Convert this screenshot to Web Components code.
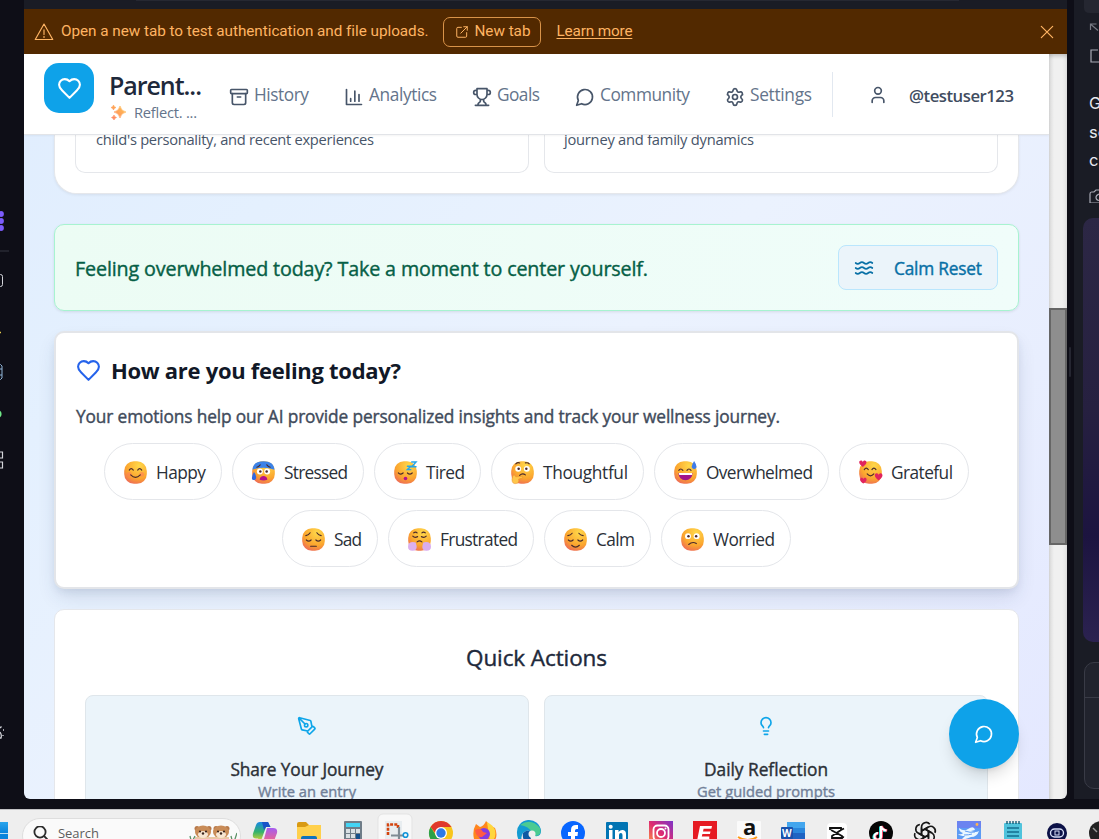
<!DOCTYPE html>
<html lang="en">
<head>
<meta charset="utf-8">
<title>Parent Journal</title>
<style>
html,body{margin:0;height:100%;overflow:hidden;background:#0e0e17}
body{font-family:"Open Sans","Noto Sans",sans-serif;color:#1e293b}
</style>
</head>
<body>
<desk-shell></desk-shell>
<script>
const define=(name,html,setup)=>customElements.define(name,class extends HTMLElement{
  connectedCallback(){
    if(this.shadowRoot)return;
    const r=this.attachShadow({mode:'open'});
    r.innerHTML=typeof html==='function'?html(this):html;
    if(setup)setup(this,r);
  }
});

/* One line of text; "w" spreads the letters to the given width, b="500" thickens the regular face. */
define('ui-text',el=>`<style>:host{display:block;flex:none;white-space:pre;line-height:1;height:1em;font-size:${el.getAttribute('s')||16}px;font-weight:${el.getAttribute('b')||400};${el.getAttribute('b')==='500'?'-webkit-text-stroke:.4px currentColor':''}}span{display:inline-block;text-decoration:inherit}</style><span><slot></slot></span>`,
(el,r)=>{
  const w=+el.getAttribute('w'),s=r.querySelector('span'),n=el.textContent.length;
  if(!w)return;
  const nat=s.getBoundingClientRect().width;
  s.style.letterSpacing=((w-nat)/(n-1))+'px';
  el.style.width=w+'px';
});

const ICONS={
heart:'<path d="M19 14c1.49-1.46 3-3.21 3-5.5A5.5 5.5 0 0 0 16.500 3c-1.760 0-3 .5-4.500 2-1.500-1.500-2.740-2-4.500-2A5.500 5.500 0 0 0 2 8.500c0 2.300 1.500 4.050 3 5.500l7 7Z"/>',
archive:'<rect x="2" y="3" width="20" height="5" rx="1"/><path d="M4 8v11a2 2 0 0 0 2 2h12a2 2 0 0 0 2-2V8M10 12h4"/>',
chart:'<path d="M3 3v18h18M18 17V9M13 17V5M8 17v-3"/>',
trophy:'<path d="M6 9H4.500a2.500 2.500 0 0 1 0-5H6M18 9h1.500a2.500 2.500 0 0 0 0-5H18M4 22h16M10 14.660V17c0 .55-.47.98-.97 1.210C7.850 18.750 7 20.240 7 22M14 14.660V17c0 .55.47.98.97 1.210C16.150 18.750 17 20.240 17 22M18 2H6v7a6 6 0 0 0 12 0V2Z"/>',
chat:'<path d="M7.900 20A9 9 0 1 0 4 16.100L2 22Z"/>',
gear:'<path d="M9.671 4.136a2.340 2.340 0 0 1 4.659 0 2.340 2.340 0 0 0 3.319 1.915 2.340 2.340 0 0 1 2.330 4.033 2.340 2.340 0 0 0 0 3.831 2.340 2.340 0 0 1-2.330 4.033 2.340 2.340 0 0 0-3.319 1.915 2.340 2.340 0 0 1-4.659 0 2.340 2.340 0 0 0-3.320-1.915 2.340 2.340 0 0 1-2.330-4.033 2.340 2.340 0 0 0 0-3.831A2.340 2.340 0 0 1 6.350 6.051a2.340 2.340 0 0 0 3.319-1.915"/><circle cx="12" cy="12" r="3"/>',
user:'<path d="M19 21v-2a4 4 0 0 0-4-4H9a4 4 0 0 0-4 4v2"/><circle cx="12" cy="7" r="4"/>',
waves:'<path d="M2 6c.6.5 1.200 1 2.500 1C7 7 7 5 9.500 5c2.600 0 2.400 2 5 2 2.500 0 2.500-2 5-2 1.300 0 1.900.5 2.500 1M2 12c.6.5 1.200 1 2.500 1 2.500 0 2.500-2 5-2 2.600 0 2.400 2 5 2 2.500 0 2.500-2 5-2 1.300 0 1.900.5 2.500 1M2 18c.6.5 1.200 1 2.500 1 2.500 0 2.500-2 5-2 2.600 0 2.400 2 5 2 2.500 0 2.500-2 5-2 1.300 0 1.900.5 2.500 1"/>',
pen:'<path d="M15.707 21.293a1 1 0 0 1-1.414 0l-1.586-1.586a1 1 0 0 1 0-1.414l5.586-5.586a1 1 0 0 1 1.414 0l1.586 1.586a1 1 0 0 1 0 1.414zM18 13l-1.375-6.874a1 1 0 0 0-.746-.776L3.235 2.028a1 1 0 0 0-1.207 1.207L5.350 15.879a1 1 0 0 0 .776.746L13 18M2.300 2.300l7.286 7.286"/><circle cx="11" cy="11" r="2"/>',
bulb:'<path d="M15 14c.2-1 .7-1.700 1.500-2.500 1-.9 1.500-2.200 1.500-3.500A6 6 0 0 0 6 8c0 1 .2 2.200 1.500 3.500.7.7 1.300 1.500 1.500 2.500M9 18h6M10 22h4"/>',
warn:'<path d="M12 2.500 22.500 21h-21ZM12 9.500v5.500M12 17.200v1.300"/>',
external:'<path d="M11 4H5a2 2 0 0 0-2 2v13a2 2 0 0 0 2 2h13a2 2 0 0 0 2-2v-6M15 3h6v6M21 3 10 14"/>',
close:'<path d="M3.500 3.500 20.500 20.500M20.500 3.500 3.500 20.500"/>'
};
define('ui-icon',el=>{const s=el.getAttribute('size')||20;return `<style>:host{display:block;flex:none;width:${s}px;height:${s}px}svg{display:block}</style><svg width="${s}" height="${s}" viewBox="0 0 24 24" fill="none" stroke="currentColor" stroke-width="${el.getAttribute('sw')||2}" stroke-linecap="round" stroke-linejoin="round">${ICONS[el.getAttribute('name')]}</svg>`});

/* Emoji faces */
const B='#4a2a2b',st=(d,w=1.2,c=B)=>`<path d="${d}" fill="none" stroke="${c}" stroke-width="${w}" stroke-linecap="round"/>`;
const eyes=(y,l=8.2,r=15.8)=>`<circle cx="${l}" cy="${y}" r="3.100" fill="#fff"/><circle cx="${r}" cy="${y}" r="3.100" fill="#fff"/><circle cx="${l+.5}" cy="${y}" r="1.300" fill="${B}"/><circle cx="${r-.5}" cy="${y}" r="1.300" fill="${B}"/>`;
const heart=(x,y,k)=>`<path transform="translate(${x} ${y}) scale(${k})" d="M0 1.500C-1-1-4-.5-4 2c0 2 2 3.500 4 5 2-1.500 4-3 4-5 0-2.500-3-3-4-.5Z" fill="#e0245e"/>`;
const FACES={
happy:'<circle cx="5.500" cy="14" r="2.500" fill="#ff7a5c" opacity=".55"/><circle cx="18.500" cy="14" r="2.500" fill="#ff7a5c" opacity=".55"/>'+st('M5.500 9.500q2-3 4.200 0M14.300 9.500q2-3 4.200 0M7 14.500q5 5 10 0'),
stressed:'<path d="M.5 9C1 3 5 .2 12 .2S23 3 23.500 9Q12 5 .5 9Z" fill="#3b82e8"/>'+eyes(11)+st('M5 6.500q2-.5 3.500-2.500M19 6.500q-2-.5-3.500-2.500')+'<path d="M8 19.500c0-5 8-5 8 0q-4 1.500-8 0Z" fill="#b5128a"/><path d="M2 11.500q3.500 4 1.800 7.500-2 1.800-3.700 0-.8-3 1.900-7.500" fill="#3169e0"/>',
tired:st('M4.500 12.500q2 2.500 5 0M14 12.500q2.500 2.500 5 0')+'<circle cx="12" cy="18.300" r="1.900" fill="#b5128a"/>'+st('M18.500 1H23l-4.500 5H23M14 5.500h3.500L14 9h3.500',1.5,'#25a5e8'),
thoughtful:eyes(8.2,7.5,16.5)+st('M5 3q2-2 4-1M15 2q3-.5 4 1M9 15q3-3 6-.5')+'<path d="M2 15q2-1.500 3 1.500l7-.5q1 1.500-1 2l-3 .8q1 4.500-3 4.800-4 .5-4-4.500Z" fill="#ffc64b" stroke="#e58b29" stroke-width=".5"/>',
overwhelmed:st('M5 9.800q2-3 4.300 0M13.500 9.800q2-3 4.300 0')+'<path d="M4.500 12.500h15q-.8 7.500-7.500 7.500t-7.500-7.500Z" fill="#a1158a"/><path d="M5 12.500h14v2.200H5.500Z" fill="#fff"/><path d="M21 0q5 7.500 0 8.500-5-1 0-8.500" fill="#3f7bea"/>',
grateful:st('M5.500 9q2-3 4.200 0M13.500 9q2-3 4.200 0M8.500 13.500q3.500 4 7 0')+heart(4,-.5,.95)+heart(20.5,13,1)+heart(4.5,17.5,.85),
sad:st('M4 8q3-.5 4.500-3M20 8q-3-.5-4.500-3M4.500 12.500q2.500 2.500 5 0M14.500 12.500q2.500 2.500 5 0M9 19h6'),
frustrated:st('M6 5q2-1.500 3.500 0M18 5q-2-1.500-3.500 0M5 8.500q2 2.200 5 .5M14 9q3 1.700 5-.5M9.500 14.500q2.500-2 5 0')+'<path d="M8 15q-8-1.500-8 4.500 0 4.500 5 4.300 4.500-.3 4-5Z" fill="#dcb0ee"/><path d="M16 15q8-1.500 8 4.500 0 4.500-5 4.300-4.500-.3-4-5Z" fill="#d9adee"/>',
calm:st('M4 8q3-.5 4.500-2.500M20 8q-3-.5-4.500-2.500M4.500 12.500q2.500 2.500 5 0M14.500 12.500q2.500 2.500 5 0M8 18q4 4 8 0'),
worried:eyes(8.5,7.3,16.3)+st('M8 17.200q4-3.500 8-1')
};
define('mood-face',el=>`<style>:host{display:block;flex:none;width:23px;height:23px}svg{display:block;overflow:visible}</style><svg width="23" height="23" viewBox="0 0 24 24"><defs><radialGradient id="g" cx=".65" cy=".2" r=".95"><stop offset="0" stop-color="#ffd84a"/><stop offset=".6" stop-color="#fba52e"/><stop offset="1" stop-color="#ea5a62"/></radialGradient></defs><rect x=".2" y=".2" width="23.600" height="23.600" rx="10.200" fill="url(#g)"/>${FACES[el.getAttribute('kind')]}</svg>`);

define('preview-banner',`<style>
:host{display:flex;align-items:center;height:45px;box-sizing:border-box;background:#522900;color:#ffb463;padding:0 12px 0 10px;font-family:Roboto,sans-serif}
.btn{display:flex;align-items:center;box-sizing:border-box;width:98px;height:30px;border:1px solid #d99349;border-radius:7px;margin:1px 15px 0 15px;padding:0 0 0 11px;gap:6px}
.btn ui-icon{margin-top:-1px}.btn ui-text{margin:0 0 0 -.5px}
.link{text-decoration:underline;text-underline-offset:2px;margin:1px 0 0 .5px}.t{margin:1px 0 0 7px}.x{margin-left:auto}
</style><ui-icon name="warn" size="20" sw="1.400"></ui-icon><ui-text class="t" s="15.300" w="367">Open a new tab to test authentication and file uploads.</ui-text><div class="btn"><ui-icon name="external" size="14" sw="1.700"></ui-icon><ui-text s="15.300" w="56">New tab</ui-text></div><ui-text class="link" s="15.300" w="76">Learn more</ui-text><ui-icon class="x" name="close" size="16" sw="1.800"></ui-icon>`);

define('nav-item',el=>`<style>:host{display:flex;align-items:center;gap:5px;color:#475569}ui-text{color:#64748b;margin-top:-4px}</style><ui-icon name="${el.getAttribute('icon')}"></ui-icon><ui-text s="17.300" w="${el.getAttribute('w')}">${el.textContent}</ui-text>`);

define('app-header',`<style>
:host{display:flex;height:80px;box-sizing:content-box;background:#fff;border-bottom:1px solid #e2e4e8;box-shadow:0 1px 2px #0000000c;position:relative;z-index:2;padding-left:20px}
.logo{width:50px;height:50px;margin-top:9px;border-radius:15px;background:#0ea2e9;color:#fff;display:grid;place-items:center}
.name{margin:19px 27px 0 15px;width:93px}.sub{display:flex;gap:8px;margin:7px 0 0 2px;color:#64748b}
nav{display:flex;gap:35px;height:86px;align-items:center}
.sep{width:1px;height:45px;background:#e2e8f0;margin:18px 35px 0 20px}
.user{display:flex;height:82px;align-items:center;gap:21px;color:#475569}.user ui-text{color:#3f4c60;margin-top:3px}
</style><div class="logo"><ui-icon name="heart" size="25"></ui-icon></div>
<div class="name"><ui-text s="25" b="600" w="93">Parent...</ui-text><div class="sub"><svg width="15" height="15" viewBox="0 0 15 15"><defs><linearGradient id="s" x1="1" y1="0" x2="0" y2="1"><stop stop-color="#ffc94f"/><stop offset="1" stop-color="#ff7e63"/></linearGradient></defs><path fill="url(#s)" d="M9 1q1 5 6 6-5 1-6 6-1-5-6-6 5-1 6-6ZM2.500 0q.4 2 2.500 2.500Q2.900 3 2.500 5 2 3 0 2.500 2 2 2.500 0ZM3 10q.4 2 2.500 2.500Q3.400 13 3 15 2.500 13 .5 12.500 2.500 12 3 10Z" stroke="url(#s)" stroke-width=".6"/></svg><ui-text s="14.700" w="63">Reflect. ...</ui-text></div></div>
<nav><nav-item icon="archive" w="55">History</nav-item><nav-item icon="chart" w="68">Analytics</nav-item><nav-item icon="trophy" w="43">Goals</nav-item><nav-item icon="chat" w="90">Community</nav-item><nav-item icon="gear" w="62">Settings</nav-item></nav><div class="sep"></div><div class="user"><ui-icon name="user"></ui-icon><ui-text s="16.700" b="600" w="105">@testuser123</ui-text></div>`);

define('insight-card',`<style>
:host{display:flex;gap:15px;height:59px;box-sizing:border-box;margin:0 30px 0 30px;background:#fff;border:1px solid #e5e7eb;border-top:0;border-radius:0 0 22px 22px;padding:0 20px;box-shadow:0 1px 3px #0001;color:#475569}
div{flex:1 1 0;min-width:0;box-sizing:border-box;height:38px;border:1px solid #e5e7eb;border-top:0;border-radius:0 0 10px 10px;padding-left:20px}ui-text{margin-top:-3px}.b ui-text{margin-left:-1px}
</style><div><ui-text s="14.700" w="278">child's personality, and recent experiences</ui-text></div><div class="b"><ui-text s="14.700" w="190">journey and family dynamics</ui-text></div>`);

define('calm-banner',`<style>
:host{display:flex;align-items:center;justify-content:space-between;box-sizing:border-box;height:87px;margin:30px 30px 0 30px;padding:0 20px;border:1px solid #a7f3d0;border-radius:10px;background:linear-gradient(90deg,#ecfcf4,#f0fdfa);box-shadow:0 1px 3px #00000018;color:#065f46}
.btn{display:flex;align-items:center;gap:20px;box-sizing:border-box;width:160px;height:45px;padding-left:15px;border:1px solid #bae6fd;border-radius:8px;background:#ebf4fa;color:#0870a6}ui-text{margin-top:2px}.btn ui-text{margin-top:3px}
</style><ui-text s="19.700" b="500" w="573">Feeling overwhelmed today? Take a moment to center yourself.</ui-text><div class="btn"><ui-icon name="waves"></ui-icon><ui-text s="17.300" b="500" w="88">Calm Reset</ui-text></div>`);

define('mood-chip',el=>`<style>:host{display:flex;align-items:center;box-sizing:border-box;height:57px;border:1px solid #e4e6ea;border-radius:29px;background:#fff;padding:0 15px 0 19px;gap:9px;color:#2a3038}ui-text{margin-top:2px}mood-face{margin-top:1px}</style><mood-face kind="${el.getAttribute('kind')}"></mood-face><ui-text s="17.300" w="${el.getAttribute('w')}">${el.textContent}</ui-text>`);

define('mood-card',`<style>
:host{display:block;box-sizing:border-box;height:258px;margin:20px 30px 0 30px;padding:24px 20px 0 20px;border:2px solid #e3e5e9;border-radius:10px;background:#fff;box-shadow:0 10px 20px -3px #20386024,0 4px 8px -2px #20386018}
.h{display:flex;align-items:center;gap:10px;color:#2563eb;height:28px}.h ui-icon{margin-top:-2px}.h ui-text{color:#111827;margin-top:-3px}
.p{color:#414b5b;height:17px;margin-top:23px}
.row{display:flex;justify-content:center;gap:10px;margin-top:10px}.first{margin-top:18px}
</style><div class="h"><ui-icon name="heart" size="25"></ui-icon><ui-text s="22" b="700" w="290">How are you feeling today?</ui-text></div>
<ui-text class="p" s="17.300" b="500" w="704">Your emotions help our AI provide personalized insights and track your wellness journey.</ui-text>
<div class="row first"><mood-chip kind="happy" w="50">Happy</mood-chip><mood-chip kind="stressed" w="64">Stressed</mood-chip><mood-chip kind="tired" w="39">Tired</mood-chip><mood-chip kind="thoughtful" w="85">Thoughtful</mood-chip><mood-chip kind="overwhelmed" w="107">Overwhelmed</mood-chip><mood-chip kind="grateful" w="62">Grateful</mood-chip></div>
<div class="row"><mood-chip kind="sad" w="28">Sad</mood-chip><mood-chip kind="frustrated" w="78">Frustrated</mood-chip><mood-chip kind="calm" w="39">Calm</mood-chip><mood-chip kind="worried" w="62">Worried</mood-chip></div>`);

define('action-card',el=>`<style>:host{display:flex;flex-direction:column;align-items:center;flex:1;box-sizing:border-box;height:140px;border:1px solid #dfe6eb;border-radius:8px;background:#ebf4fa;padding-top:20px;color:#0ea5e9}.a{color:#2b3037;margin-top:25px}.b{color:#718098;margin-top:6px}</style><ui-icon name="${el.getAttribute('icon')}"></ui-icon><ui-text class="a" s="17.300" b="500" w="${el.getAttribute('w1')}">${el.getAttribute('label')}</ui-text><ui-text class="b" s="14.700" b="500" w="${el.getAttribute('w2')}">${el.getAttribute('hint')}</ui-text>`);

define('quick-actions',`<style>
:host{display:block;box-sizing:border-box;height:240px;margin:20px 30px 0 30px;padding:37px 30px 0;border:1px solid #e5e7eb;border-radius:10px;background:#fff}
.t{display:flex;justify-content:center;height:22.500px}.c{display:flex;gap:15px;margin-top:25px}
</style><div class="t"><ui-text s="22.500" b="500" w="141">Quick Actions</ui-text></div><div class="c"><action-card icon="pen" label="Share Your Journey" w1="153" hint="Write an entry" w2="98"></action-card><action-card icon="bulb" label="Daily Reflection" w1="124" hint="Get guided prompts" w2="138"></action-card></div>`);

define('chat-fab',`<style>:host{position:absolute;right:30px;bottom:30px;width:70px;height:70px;border-radius:50%;display:grid;place-items:center;background:#0ea2e9;color:#fff;box-shadow:0 10px 15px -3px #0002,0 4px 6px -4px #0002}</style><ui-icon name="chat" size="20"></ui-icon>`);

define('left-rail',`<style>:host{display:block;width:24px;background:#0e0e17}svg{display:block}</style>
<svg width="24" height="809" fill="none"><g fill="#7c5cfc"><circle cx="1" cy="214" r="2.900"/><circle cx="1" cy="221" r="2.900"/><circle cx="1" cy="228" r="2.900"/></g><path d="M0 251h9" stroke="#292a35" stroke-width="1.500"/><rect x="-8" y="274.500" width="10.500" height="12" rx="2" stroke="#d3d4da"/><path d="M0 332.500h1" stroke="#e3c94b" stroke-width="1.500"/><path d="M-6 364.500H.5l1.500 1.500v12l-1.500 1.500H-6M-6 369H2M-6 375H2" stroke="#8fb4d8"/><circle cx="-2" cy="414" r="3.600" fill="#6ee787"/><path d="M-3 452h5.500v6H-3M-3 462h5.500v6H-3" stroke="#d3d4da" stroke-width="1.200"/><path d="M0 728l1.500-1.500M3 730h1M0 732q2 3 1 6H-1M3 735v1" stroke="#d3d4da" stroke-width="1.300"/></svg>`);

define('right-rail',`<style>
:host{display:flex;flex-direction:column;width:25px;height:799px;background:#1a1c25;box-sizing:border-box;padding-left:9px;color:#e6e7ee;overflow:hidden;font-family:Inter,sans-serif}
svg{display:block;flex:none}ui-text{margin-left:6px;margin-bottom:12px}
.img{margin-top:15px;width:40px;height:424px;flex:none;border-radius:10px;background:linear-gradient(#2c2745,#262040 45%,#1c1440 75%,#2b2250)}
.box{margin:20px 0 0 1px;width:40px;height:127px;flex:none;border:1px solid #393b46;border-radius:10px;background:#21232d;box-sizing:border-box}.box i{display:block;border-top:1px solid #393b46;margin-top:34px}
</style><svg width="16" height="95" fill="none" stroke="#a8aab5" stroke-width="1.200"><path d="M1 0v8q0 5 6 5h9V0" fill="#252731" stroke="none"/><path d="M7.500 30v-6h6M8 24.500l7 6" stroke="#777a84"/><path d="M15 50H8v12h8"/></svg>
<ui-text s="16.500">G</ui-text><ui-text s="16.500">se</ui-text><ui-text s="16.500">c</ui-text>
<svg width="16" height="22" fill="none" stroke="#a8aab5" stroke-width="1.200"><path d="M16 11h-3l-2 2H8.500q-1.500 0-1.500 2v9h9M16 15q-3 1-3 3.500t3 3" transform="translate(0 -2)"/></svg>
<div class="img"></div><div class="box"><i></i></div>`);

/* Taskbar pictograms, each on a 24-unit square */
const APPS=[
'<defs><linearGradient id="a1" x1="0" y1="0" x2="0" y2="1"><stop stop-color="#1687e8"/><stop offset=".5" stop-color="#35b36b"/><stop offset="1" stop-color="#f2d82d"/></linearGradient><linearGradient id="a2" x1="0" y1="0" x2="0" y2="1"><stop stop-color="#a45cf0"/><stop offset="1" stop-color="#ff6778"/></linearGradient></defs><path d="M7 1h8l2.500 5H13l-4 11-1.500 4L5 17.500H3q-4 0-3-5L3 4q1-3 4-3Z" fill="url(#a1)"/><path d="M9 1h6l2.500 5H13l-2 3Z" fill="#1753c7"/><path d="M14 7h6q5 0 4 5l-3 8q-1 3-5 3H9l-1-1 3-4Z" fill="url(#a2)"/>',
'<path d="M0 3q0-2 2-2h7l3 3h12v20H0Z" fill="#d99a13"/><path d="M0 6h8l4-2h12v20H0Z" fill="#ffd04c"/><rect x="4" y="15" width="16" height="9" rx="2" fill="#1072bd"/>',
'<rect x="3" width="18" height="26" rx="1" fill="#6f7d88"/><rect x="5" y="2" width="14" height="4" fill="#43d4f4"/><path d="M5 8h4v4H5ZM10 8h4v4h-4ZM15 8h4v4h-4ZM5 13h4v4H5ZM10 13h4v4h-4ZM5 18h4v4H5ZM10 18h4v4h-4Z" fill="#dae0e4"/><path d="M15 13h4v9h-4Z" fill="#16508b"/>',
'<rect x="-7" y="-7" width="34" height="42" rx="5" fill="#f8f8f8" stroke="#e3e3e3"/><rect x="0" y="0" width="17" height="18" fill="#e8edf0"/><path d="M3 14V3.500h10V7" fill="none" stroke="#d4430d" stroke-width="2.600" stroke-dasharray="3 1.200"/><path d="M6 14.500h13M14 6v14" stroke="#7e8b94" stroke-width="2.200"/><circle cx="20.500" cy="14" r="2.300" fill="none" stroke="#1293d8" stroke-width="1.600"/>',
'<circle cx="12" cy="12" r="12" fill="#f8c51c"/><path d="M1.600 6A12 12 0 0 1 22.400 6H12l-4 8Z" fill="#e0382c"/><path d="M1.600 6 8 16l5 1-3 7A12 12 0 0 1 1.600 6Z" fill="#2ca04a"/><circle cx="12" cy="12" r="6" fill="#fff"/><circle cx="12" cy="12" r="4.700" fill="#2d79e8"/>',
'<path d="M3 3l4 3q4-1 6-6l5 5 4 2q3 7 0 12-4 5-10 5T1 18Q-1 10 3 3" fill="#ff861d"/><path d="M14 1q6 3 8 8 2 9-5 12Z" fill="#ffd63d"/><circle cx="11" cy="13" r="6" fill="#833be0"/><path d="M2 9q6-3 8 2l4 1-5 4Q3 17 2 9" fill="#ff5a43"/>',
'<path d="M0 12A12 12 0 0 1 24 10q0 6-6 5-4 0-3-3-4-5-9 0-4 6 2 12-8-3-8-12" fill="#139bd2"/><path d="M3 4Q14-4 23 7q2 8-5 8-4 0-3-3-3-7-12-8" fill="#4bcb92"/><path d="M6 12q5-5 9 0-3 1-1 6l8 2q-7 7-13 2Q5 18 6 12" fill="#0c59a4"/><circle cx="15" cy="13" r="3.500" fill="#eee"/>',
'<circle cx="12" cy="12" r="12" fill="#0866ff"/><path d="M10 24v-9H7v-4h3V9q0-5 5-5h2v4h-1.500Q14 8 14 9.500V11h3l-.5 4H14v9" fill="#fff"/>',
'<rect x="1" y="1" width="22" height="23" rx="1" fill="#0274b3"/><path d="M4 9h3.500v12H4ZM10 9h3.500v2q2-2.500 4.500-2 3 .5 3 4v8h-3.500v-7q0-2-1.700-2T14 14v7h-4Z" fill="#fff"/><circle cx="5.700" cy="5.700" r="2" fill="#fff"/>',
'<defs><linearGradient id="i" x1="1" y1="0" x2="0" y2="1"><stop stop-color="#7c35c9"/><stop offset=".5" stop-color="#dd2a72"/><stop offset="1" stop-color="#ff9c3c"/></linearGradient></defs><rect width="24" height="24" fill="url(#i)"/><rect x="4.500" y="4.500" width="15" height="15" rx="4" fill="none" stroke="#fff" stroke-width="1.800"/><circle cx="12" cy="12" r="4" fill="none" stroke="#fff" stroke-width="1.800"/><circle cx="16.500" cy="7.500" r="1" fill="#fff"/>',
'<rect width="24" height="24" fill="#e61b23"/><path d="M7 5h12l-.6 2.800h-7.800l-.6 2.700h7.500l-.6 2.500h-7.500l-.6 2.500h7.500V20H4Z" fill="#fff"/>',
'<rect width="24" height="24" rx="1" fill="#fafafa"/><path d="M1 16q10 6 19 0" fill="none" stroke="#ff9b17" stroke-width="2"/>',
'<path d="M6 1h18v23H6Z" fill="#1f63c2"/><path d="M6 1h18v6H6Z" fill="#43a6ee"/><path d="M6 7h18v5H6Z" fill="#2a86dc"/><rect y="6" width="12" height="12" rx="1" fill="#1a52ad"/>',
'<rect x="2" y="2" width="20" height="24" rx="4" fill="#fff"/><path d="M5 9V7h11v2l-9 6v2h10v-2L6 9M16 9l3-1.500M16 15l3 1.500" fill="none" stroke="#111" stroke-width="1.800"/>',
'<circle cx="12" cy="12" r="12" fill="#050505"/><path d="M12 5v10.500a3.300 3.300 0 1 1-3-3.300M12 5q1 4 5.500 4.500" transform="translate(-.7 .5)" fill="none" stroke="#20e3e0" stroke-width="2.600"/><path d="M12 5v10.500a3.300 3.300 0 1 1-3-3.300M12 5q1 4 5.500 4.500" transform="translate(.7 0)" fill="none" stroke="#ff3b5f" stroke-width="2.600"/><path d="M12 5v10.500a3.300 3.300 0 1 1-3-3.300M12 5q1 4 5.500 4.500" fill="none" stroke="#fff" stroke-width="2.200"/>',
'<g fill="none" stroke="#161616" stroke-width="1.600">'+[0,60,120,180,240,300].map(a=>`<path d="M8.500 14V6a4.600 4.600 0 0 1 8.300-2.700M8.500 10l6.500-3.700" transform="rotate(${a} 12 12)"/>`).join('')+'</g>',
'<rect width="24" height="24" fill="#5d9bf4"/><rect width="24" height="7" fill="#6b83f0"/><path d="M2 7q5 4 9 1 6-4 7 1l-4 1q5 2 8 0-2 6-8 6-7 3-9 2l3-3q-5 0-7-2 4 1 5-1-4-1-4-5" fill="#eaf7ff"/><path d="M8 10q5 2 10 1M7 14q5 0 8-1" stroke="#5d9bf4" fill="none"/><circle cx="20" cy="3.500" r="1.400" fill="#ffb54c"/>',
'<rect x="3" y="2" width="18" height="24" rx="1" fill="#50c3dc"/><path d="M6 0v3M9 0v3M12 0v3M15 0v3M18 0v3" stroke="#145c77" stroke-width="1.400"/><path d="M6 7h12M6 11h12M6 15h12" stroke="#136f8e" stroke-width="1.500"/>',
'<circle cx="12" cy="12" r="10" fill="#0c1147"/><rect x="5.500" y="8" width="13" height="8" rx="4" fill="none" stroke="#d5dcf5" stroke-width="1.400"/><rect x="10" y="10" width="4" height="4" fill="none" stroke="#d5dcf5"/>',
'<circle cx="12" cy="12" r="12" fill="#222"/><path d="M4 7l4 4" stroke="#999" stroke-width="1.500"/>'
];
define('task-bar',`<style>
:host{display:flex;height:30px;background:#eee;border-top:1px solid #c2c2c5;box-sizing:border-box;overflow:hidden;align-items:flex-start}
.win{width:8px;height:11px;margin:12px 14px 0 0;background:linear-gradient(#2aa5ec,#0a83dc);border-bottom:1px solid #b9dcf2;box-shadow:0 8px 0 #0a83dc;flex:none;box-sizing:content-box}
.s{display:flex;box-sizing:border-box;width:219px;height:36px;margin:8px 2px 0 0;border:1px solid #dedede;border-radius:18px;background:#fafafa;color:#5d5d5d;padding:7px 3px 0 9px;flex:none}.s ui-text{margin:1px 0 0 10px}.bear{margin-left:auto;margin-top:-2px}
.apps{display:flex}.app{position:relative;width:44px;flex:none;display:flex;justify-content:center;padding-top:11px}.app svg{overflow:visible;display:block}
.g{position:absolute;line-height:1;font-weight:700}
</style><div class="win"></div><div class="s"><svg width="16" height="18" fill="none" stroke="#2b2b2b" stroke-width="1.800"><circle cx="8" cy="6" r="5.600"/><path d="m12 10 4 4"/></svg><ui-text s="13" w="41">Search</ui-text>
<svg class="bear" width="48" height="26" viewBox="0 0 48 26"><g fill="#b7794a"><circle cx="8" cy="4.500" r="2.500"/><circle cx="20" cy="4.500" r="2.500"/><circle cx="27" cy="4.500" r="2.500"/><circle cx="38" cy="4.500" r="2.500"/></g><g fill="#c98c58"><ellipse cx="14" cy="8" rx="8" ry="6.500"/><ellipse cx="32" cy="8" rx="8" ry="6.500"/></g><path d="M6 13h34v13H6Z" fill="#e9c8a5"/><g fill="#f7e6d2"><ellipse cx="14" cy="10.500" rx="5" ry="3.500"/><ellipse cx="32" cy="10.500" rx="5" ry="3.500"/></g><g fill="#3b251d"><circle cx="11" cy="7.500" r="1.100"/><circle cx="17" cy="7.500" r="1.100"/><circle cx="14" cy="9.500" r="1.200"/><circle cx="29" cy="7.500" r="1.100"/><circle cx="35" cy="7.500" r="1.100"/><circle cx="32" cy="9.500" r="1.200"/></g><path d="M3 20 1 12M3 18l3-6M44 20l-2-8M45 18l3-9" stroke="#5c9267" stroke-width="1.300"/></svg></div>
<div class="apps">${APPS.map((a,i)=>`<div class="app"><svg width="24" height="24" viewBox="0 0 24 24">${a}</svg>${i===11?'<span class="g" style="font-size:22px;top:5px;left:16px;color:#111">a</span>':i===12?'<span class="g" style="font-size:10px;top:18px;left:11px;color:#fff">W</span>':''}</div>`).join('')}</div>`);

define('page-scrollbar',`<style>:host{display:block;width:18px;height:745px;background:linear-gradient(90deg,#d9d9d9,#f0f0f0 5px,#f0f0f0 13px,#e4e4e4);box-shadow:inset 0 4px 4px -2px #0003}div{box-sizing:border-box;height:237px;border:2px solid #666;background:#8e8e8e}:host::before{content:"";display:block;height:254px}</style><div></div>`);

define('desk-shell',`<style>
:host{display:flex;flex-direction:column;height:839px;width:1099px;overflow:hidden}
.top{display:flex;height:809px;background:#0e0e17;flex:none}
.mid{width:1043px;flex:none;height:799px;border-radius:0 0 6px 6px;overflow:hidden}
.strip{height:9px;background:linear-gradient(90deg,#1a1c25 112px,#262832 112px,#262832 935px,#1a1c25 935px) 0 0/100% 1px no-repeat #1a1c25}
.view{display:flex;height:745px}.page{position:relative;width:1025px;height:745px;overflow:hidden;background:linear-gradient(135deg,#e0edfe 0%,#e4f0fe 22%,#ebf2fe 50%,#e8eefe 75%,#e4e8ff 100%)}
.gap{width:7px;flex:none;display:flex;align-items:center}.gap i{width:2px;height:30px;margin:-86px 0 0 2px;background:#252631;border-radius:1px}
</style><div class="top"><left-rail></left-rail><div class="mid"><div class="strip"></div><preview-banner></preview-banner><div class="view"><div class="page"><app-header></app-header><insight-card></insight-card><calm-banner></calm-banner><mood-card></mood-card><quick-actions></quick-actions><chat-fab></chat-fab></div><page-scrollbar></page-scrollbar></div></div><div class="gap"><i></i></div><right-rail></right-rail></div><task-bar></task-bar>`);
</script>
</body>
</html>
